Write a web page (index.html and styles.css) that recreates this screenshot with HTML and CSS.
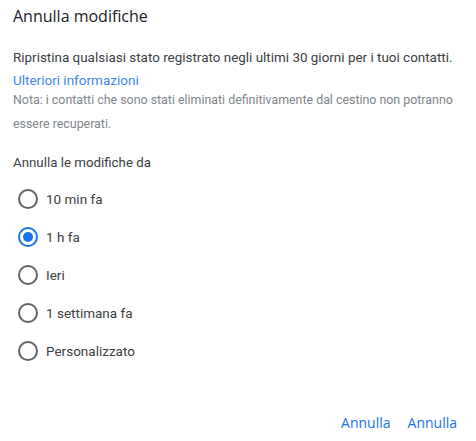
FILE: index.html
```html
<!DOCTYPE html>
<html lang="it">
<head>
<meta charset="utf-8">
<link rel="stylesheet" href="styles.css">
</head>
<body>
<div class="dialog">
  <h2 class="title">Annulla modifiche</h2>
  <p class="desc">Ripristina qualsiasi stato registrato negli ultimi 30 giorni per i tuoi contatti.</p>
  <a class="link" href="#">Ulteriori informazioni</a>
  <p class="note">Nota: i contatti che sono stati eliminati definitivamente dal cestino non potranno<br>essere recuperati.</p>
  <p class="label">Annulla le modifiche da</p>
  <div class="options">
    <div class="option">
      <svg class="radio" viewBox="0 0 20 20" width="20" height="20"><circle cx="10" cy="10" r="9" fill="none" stroke="#5f6368" stroke-width="2"/></svg>
      <span class="opt-text">10 min fa</span>
    </div>
    <div class="option">
      <svg class="radio" viewBox="0 0 20 20" width="20" height="20"><circle cx="10" cy="10" r="9" fill="none" stroke="#1a73e8" stroke-width="2"/><circle cx="10" cy="10" r="5" fill="#1a73e8"/></svg>
      <span class="opt-text">1 h fa</span>
    </div>
    <div class="option">
      <svg class="radio" viewBox="0 0 20 20" width="20" height="20"><circle cx="10" cy="10" r="9" fill="none" stroke="#5f6368" stroke-width="2"/></svg>
      <span class="opt-text">Ieri</span>
    </div>
    <div class="option">
      <svg class="radio" viewBox="0 0 20 20" width="20" height="20"><circle cx="10" cy="10" r="9" fill="none" stroke="#5f6368" stroke-width="2"/></svg>
      <span class="opt-text">1 settimana fa</span>
    </div>
    <div class="option">
      <svg class="radio" viewBox="0 0 20 20" width="20" height="20"><circle cx="10" cy="10" r="9" fill="none" stroke="#5f6368" stroke-width="2"/></svg>
      <span class="opt-text">Personalizzato</span>
    </div>
  </div>
  <div class="actions">
    <button class="btn">Annulla</button>
    <button class="btn">Annulla</button>
  </div>
</div>
</body>
</html>
```

FILE: styles.css
```css
html, body {
  margin: 0;
  padding: 0;
  background: #ffffff;
}
body {
  font-family: Roboto, "Liberation Sans", sans-serif;
  width: 476px;
  height: 441px;
  overflow: hidden;
}
.dialog {
  display: flex;
  flex-direction: column;
  align-items: flex-start;
  padding: 4px 19px 0 13px;
}
.title {
  margin: 0;
  font-family: "Open Sans", Roboto, sans-serif;
  font-weight: 400;
  font-size: 16px;
  line-height: 24px;
  color: #202124;
}
.desc {
  margin: 20px 0 0 0;
  font-size: 13.45px;
  line-height: 20px;
  color: #3c4043;
  white-space: nowrap;
}
.link {
  margin-top: 2px;
  font-size: 13.5px;
  line-height: 20px;
  color: #4285f4;
  text-decoration: none;
}
.note {
  margin: -2px 0 0 0;
  font-size: 12.4px;
  line-height: 24px;
  color: #80868b;
  white-space: nowrap;
}
.label {
  margin: 17px 0 0 0;
  font-size: 13.3px;
  line-height: 20px;
  color: #3c4043;
}
.options {
  display: flex;
  flex-direction: column;
  margin-top: 7px;
}
.option {
  display: flex;
  align-items: center;
  height: 38px;
  gap: 8px;
  padding-left: 5px;
}
.radio {
  display: block;
  flex: none;
}
.opt-text {
  font-size: 13.5px;
  line-height: 17px;
  color: #3c4043;
  padding-top: 1px;
}
.actions {
  align-self: stretch;
  display: flex;
  justify-content: flex-end;
  gap: 17px;
  margin-top: 43px;
}
.btn {
  border: none;
  background: none;
  padding: 0;
  font-family: "Open Sans", Roboto, sans-serif;
  font-size: 14px;
  line-height: 20px;
  color: #1a73e8;
  cursor: pointer;
}
```
